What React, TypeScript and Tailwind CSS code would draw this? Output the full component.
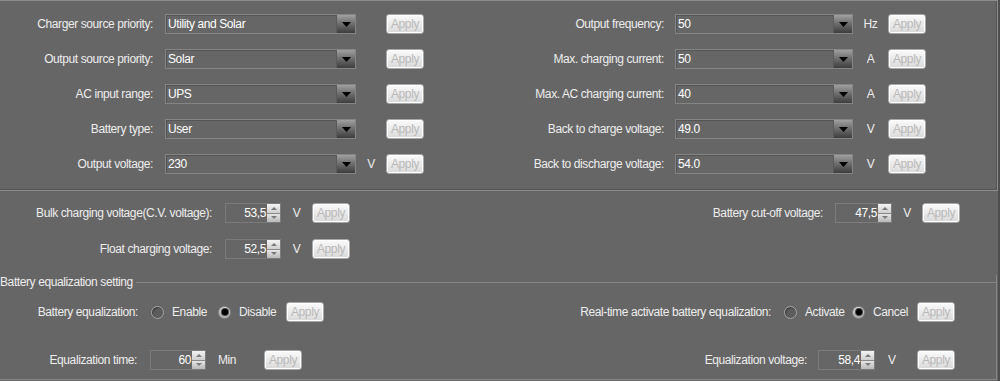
import React from "react"

const font = { fontFamily: '"Liberation Sans", Arial, sans-serif' }

function ApplyButton() {
  return (
    <button className="w-[38px] h-[20px] shrink-0 rounded-[3px] border border-[#a8a8a8] bg-gradient-to-b from-[#fbfbfb] to-[#d9d9d9] text-[12px] leading-none text-[#b9b9b9] shadow-[inset_0_0_0_1px_#ffffff]">
      Apply
    </button>
  )
}

function Combo({ value, width }: { value: string; width: string }) {
  return (
    <div className={`${width} h-[20px] shrink-0 flex border border-[#858585] shadow-[inset_1px_1px_0_#555]`}>
      <div className="flex-1 pl-[2px] flex items-center text-[12px] text-white">{value}</div>
      <div className="w-[19px] h-full flex items-center justify-center bg-gradient-to-b from-[#a0a0a0] via-[#6c6c6c] to-[#3e3e3e] border-l border-[#5a5a5a]">
        <svg width="9" height="5" viewBox="0 0 9 5">
          <path d="M0 0 H9 L4.5 5 Z" fill="#000" />
        </svg>
      </div>
    </div>
  )
}

function Spinner({ value, width }: { value: string; width: string }) {
  return (
    <div className={`${width} h-[20px] shrink-0 flex border border-[#7c7c7c]`}>
      <div className="flex-1 pr-[1px] flex items-center justify-end text-[12px] text-white">{value}</div>
      <div className="w-[13px] h-full flex flex-col">
        <div className="flex-1 flex items-center justify-center bg-gradient-to-b from-[#f4f4f4] to-[#cfcfcf] border-b border-[#8a8a8a]">
          <svg width="6" height="3" viewBox="0 0 6 3">
            <path d="M0 3 H6 L3 0 Z" fill="#7a7a7a" />
          </svg>
        </div>
        <div className="flex-1 flex items-center justify-center bg-gradient-to-b from-[#e6e6e6] to-[#b9b9b9]">
          <svg width="6" height="3" viewBox="0 0 6 3">
            <path d="M0 0 H6 L3 3 Z" fill="#7a7a7a" />
          </svg>
        </div>
      </div>
    </div>
  )
}

function Radio({ checked }: { checked?: boolean }) {
  return checked ? (
    <span className="w-[13px] h-[13px] shrink-0 rounded-full bg-gradient-to-b from-[#d8d8d8] to-[#a8a8a8] border border-[#8a8a8a] flex items-center justify-center">
      <span className="w-[6px] h-[6px] rounded-full bg-black shadow-[0_0_0_1px_#444]" />
    </span>
  ) : (
    <span className="w-[13px] h-[13px] shrink-0 rounded-full bg-[#5c5c5c] border border-[#a6a6a6] shadow-[inset_1px_1px_1px_#3a3a3a]" />
  )
}

const leftRows = [
  { label: "Charger source priority:", value: "Utility and Solar", unit: "" },
  { label: "Output source priority:", value: "Solar", unit: "" },
  { label: "AC input range:", value: "UPS", unit: "" },
  { label: "Battery type:", value: "User", unit: "" },
  { label: "Output voltage:", value: "230", unit: "V" },
]

const rightRows = [
  { label: "Output frequency:", value: "50", unit: "Hz" },
  { label: "Max. charging current:", value: "50", unit: "A" },
  { label: "Max. AC charging current:", value: "40", unit: "A" },
  { label: "Back to charge voltage:", value: "49.0", unit: "V" },
  { label: "Back to discharge voltage:", value: "54.0", unit: "V" },
]

export default function App() {
  return (
    <div
      className="w-[1000px] h-[381px] bg-[#666666] text-[12px] tracking-[-0.4px] text-[#ededed] overflow-hidden border-r-2 border-[#4e4e4e]"
      style={font}
    >
      {/* Combo settings */}
      <div className="w-[998px] h-[191px] border-t border-r border-b border-[#8c8c8c] shadow-[inset_-1px_-1px_0_#555] pt-[13px] flex">
        <div className="w-[424px] flex flex-col gap-[15px]">
          {leftRows.map((r) => (
            <div key={r.label} className="h-[20px] flex items-center">
              <span className="w-[153px] text-right whitespace-nowrap">{r.label}</span>
              <span className="w-[12px]" />
              <Combo value={r.value} width="w-[191px]" />
              <span className="w-[30px] text-center">{r.unit}</span>
              <ApplyButton />
            </div>
          ))}
        </div>
        <div className="flex flex-col gap-[15px]">
          {rightRows.map((r) => (
            <div key={r.label} className="h-[20px] flex items-center">
              <span className="w-[240px] text-right whitespace-nowrap">{r.label}</span>
              <span className="w-[11px]" />
              <Combo value={r.value} width="w-[178px]" />
              <span className="w-[35px] text-center">{r.unit}</span>
              <ApplyButton />
            </div>
          ))}
        </div>
      </div>

      {/* Voltage settings */}
      <div className="h-[84px] pt-[12px] flex flex-col gap-[16px]">
        <div className="h-[20px] flex items-center">
          <span className="w-[212px] text-right whitespace-nowrap">Bulk charging voltage(C.V. voltage):</span>
          <span className="w-[13px]" />
          <Spinner value="53,5" width="w-[56px]" />
          <span className="w-[31px] text-center">V</span>
          <ApplyButton />
          <div className="ml-auto mr-[38px] flex items-center">
            <span className="whitespace-nowrap">Battery cut-off voltage:</span>
            <span className="w-[12px]" />
            <Spinner value="47,5" width="w-[57px]" />
            <span className="w-[30px] text-center">V</span>
            <ApplyButton />
          </div>
        </div>
        <div className="h-[20px] flex items-center">
          <span className="w-[212px] text-right whitespace-nowrap">Float charging voltage:</span>
          <span className="w-[13px]" />
          <Spinner value="52,5" width="w-[56px]" />
          <span className="w-[31px] text-center">V</span>
          <ApplyButton />
        </div>
      </div>

      {/* Battery equalization group */}
      <div className="w-[997px] h-[105px] flex flex-col border-r border-b border-[#858585]">
        <div className="h-[14px] flex items-center">
          <span className="whitespace-nowrap pr-[3px]">Battery equalization setting</span>
          <span className="flex-1 h-px bg-[#858585]" />
        </div>
        <div className="mt-[13px] h-[20px] flex items-center">
          <span className="w-[138px] text-right whitespace-nowrap">Battery equalization:</span>
          <span className="w-[13px]" />
          <Radio />
          <span className="ml-[8px] w-[46px]">Enable</span>
          <Radio checked />
          <span className="ml-[8px] w-[47px]">Disable</span>
          <ApplyButton />
          <div className="ml-auto mr-[41px] flex items-center">
            <span className="whitespace-nowrap">Real-time activate battery equalization:</span>
            <span className="w-[13px]" />
            <Radio />
            <span className="ml-[8px] w-[47px]">Activate</span>
            <Radio checked />
            <span className="ml-[8px] w-[44px]">Cancel</span>
            <ApplyButton />
          </div>
        </div>
        <div className="mt-[28px] h-[20px] flex items-center">
          <span className="w-[137px] text-right whitespace-nowrap">Equalization time:</span>
          <span className="w-[13px]" />
          <Spinner value="60" width="w-[56px]" />
          <span className="ml-[12px] w-[46px]">Min</span>
          <ApplyButton />
          <div className="ml-auto mr-[41px] flex items-center">
            <span className="whitespace-nowrap">Equalization voltage:</span>
            <span className="w-[11px]" />
            <Spinner value="58,4" width="w-[57px]" />
            <span className="ml-[13px] w-[29px]">V</span>
            <ApplyButton />
          </div>
        </div>
      </div>
    </div>
  )
}
